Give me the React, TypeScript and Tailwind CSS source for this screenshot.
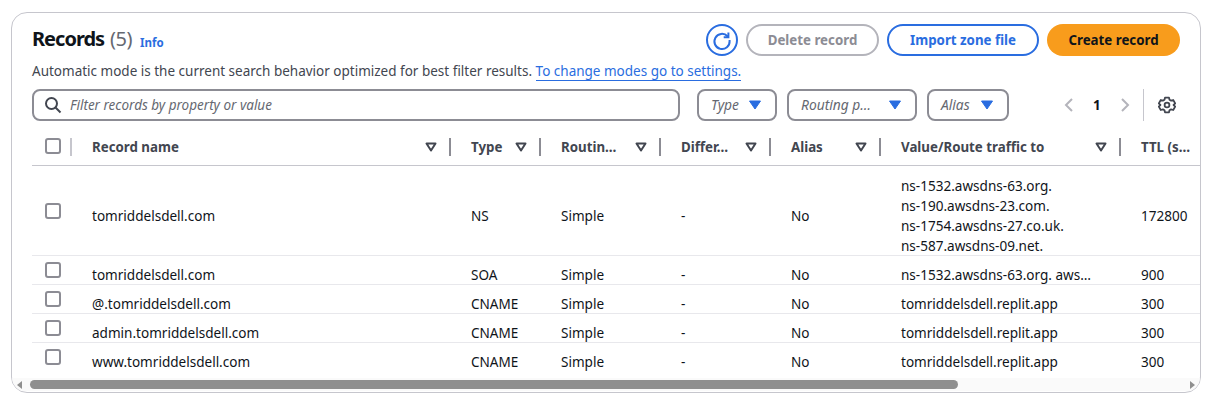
import type { ReactNode } from 'react';

const COLUMNS = 'grid grid-cols-[40px_379px_90px_120px_110px_110px_240px_90px]';

interface RecordRow {
  name: string;
  type: string;
  value: string[];
  ttl: string;
}

const RECORDS: RecordRow[] = [
  {
    name: 'tomriddelsdell.com',
    type: 'NS',
    value: ['ns-1532.awsdns-63.org.', 'ns-190.awsdns-23.com.', 'ns-1754.awsdns-27.co.uk.', 'ns-587.awsdns-09.net.'],
    ttl: '172800',
  },
  { name: 'tomriddelsdell.com', type: 'SOA', value: ['ns-1532.awsdns-63.org. aws…'], ttl: '900' },
  { name: '@.tomriddelsdell.com', type: 'CNAME', value: ['tomriddelsdell.replit.app'], ttl: '300' },
  { name: 'admin.tomriddelsdell.com', type: 'CNAME', value: ['tomriddelsdell.replit.app'], ttl: '300' },
  { name: 'www.tomriddelsdell.com', type: 'CNAME', value: ['tomriddelsdell.replit.app'], ttl: '300' },
];

function Checkbox(): JSX.Element {
  return <span className="block h-4 w-4 rounded-[3px] border-2 border-[#8c8c94] bg-white" />;
}

function SortIcon(): JSX.Element {
  return (
    <svg width="12" height="10" viewBox="0 0 12 10" className="shrink-0">
      <path d="M1.5 1.5h9L6 8.5z" fill="none" stroke="#424650" strokeWidth="2" strokeLinejoin="round" />
    </svg>
  );
}

function Caret(): JSX.Element {
  return (
    <svg width="12" height="10" viewBox="0 0 12 10" className="shrink-0">
      <path d="M0.5 1h11L6 9z" fill="#2a6de0" stroke="#2a6de0" strokeLinejoin="round" />
    </svg>
  );
}

function HeaderCell({ label, divider = true }: { label: string; divider?: boolean }): JSX.Element {
  return (
    <div className="flex h-[35px] items-center pb-[1px] pl-5 pr-[13px]">
      <span className="mt-[2px] flex-1 whitespace-nowrap text-[13.3px] font-bold text-[#424650]">{label}</span>
      {divider && <SortIcon />}
      {divider && <span className="-mr-[13px] ml-3 h-[18px] w-[2px] shrink-0 bg-[#8c8c94]" />}
    </div>
  );
}

function Select({ label, width }: { label: string; width: string }): JSX.Element {
  return (
    <div className={`flex h-8 items-center justify-between rounded-lg border-2 border-[#8c8c94] pl-[12px] pr-[14px] ${width}`}>
      <span className="text-[13.8px] italic text-[#656871]">{label}</span>
      <Caret />
    </div>
  );
}

function Button({ className, children }: { className: string; children: ReactNode }): JSX.Element {
  return (
    <button className={`flex h-8 items-center justify-center rounded-full pt-[1px] text-[13.3px] font-bold ${className}`}>
      {children}
    </button>
  );
}

function Cell({ first, children }: { first: boolean; children: ReactNode }): JSX.Element {
  return (
    <div className={`self-start pl-5 text-[13.55px] leading-5 text-[#0f141a] ${first ? 'pt-[10px]' : 'pt-[9px]'}`}>
      {children}
    </div>
  );
}

export default function App(): JSX.Element {
  return (
    <div className="h-[403px] w-[1211px] bg-white pl-[11px] pt-3 font-['Noto_Sans','Open_Sans',sans-serif]">
      <div className="h-[381px] w-[1190px] overflow-hidden rounded-2xl border border-[#c6c6cd]">
        <div className="pl-5 pr-5 pt-[11px]">
          <div className="flex h-8 items-center">
            <h1 className="mb-[2px] text-[20px] font-bold leading-8 tracking-[-1px] text-[#0f141a]">Records</h1>
            <span className="mb-[2px] ml-[6px] text-[20px] leading-8 tracking-[-0.5px] text-[#656871]">(5)</span>
            <a className="ml-2 mt-[5px] text-[11.5px] font-bold text-[#2a6de0]">Info</a>
            <div className="ml-auto flex items-center gap-2">
              <Button className="w-8 border-2 border-[#2a6de0]">
                <svg width="20" height="20" viewBox="0 0 20 20" fill="none" stroke="#2a6de0" strokeWidth="2">
                  <path d="M15.5 5.2A7.6 7.6 0 1 0 17.6 10" strokeLinecap="square" />
                  <path d="M16.4 1.5v4.7h-4.7" />
                </svg>
              </Button>
              <Button className="w-[133px] border-2 border-[#b4b4bb] text-[#8c8c94]">Delete record</Button>
              <Button className="w-[152px] border-2 border-[#2a6de0] text-[#2a6de0]">Import zone file</Button>
              <Button className="w-[133px] bg-[#f89c1c] text-[#0f141a]">Create record</Button>
            </div>
          </div>

          <p className="mt-[5px] text-[13.5px] leading-5 text-[#424650]">
            Automatic mode is the current search behavior optimized for best filter results.{' '}
            <a className="border-b border-[#2a6de0] text-[#2a6de0]">To change modes go to settings.</a>
          </p>

          <div className="mt-2 flex items-center">
            <div className="flex h-8 w-[648px] items-center rounded-lg border-2 border-[#8c8c94] pl-[10px]">
              <svg width="18" height="18" viewBox="0 0 18 18" fill="none" stroke="#424650" strokeWidth="2">
                <circle cx="7.5" cy="7.5" r="5.5" />
                <path d="M11.5 11.5l5 5" />
              </svg>
              <span className="ml-[8px] text-[13.5px] italic text-[#656871]">Filter records by property or value</span>
            </div>
            <div className="ml-[17px] flex gap-[10px]">
              <Select label="Type" width="w-20" />
              <Select label="Routing p…" width="w-[130px]" />
              <Select label="Alias" width="w-[82px]" />
            </div>
            <div className="ml-[53px] flex items-center">
              <svg width="14" height="16" viewBox="0 0 14 16" fill="none" stroke="#b4b4bb" strokeWidth="2">
                <path d="M10 2L4 8l6 6" />
              </svg>
              <span className="mx-[17px] text-[13.4px] font-bold text-[#0f141a]">1</span>
              <svg width="14" height="16" viewBox="0 0 14 16" fill="none" stroke="#b4b4bb" strokeWidth="2">
                <path d="M4 2l6 6-6 6" />
              </svg>
              <span className="ml-[11px] h-8 w-px bg-[#c6c6cd]" />
              <svg width="18" height="18" viewBox="0 0 18 18" fill="none" stroke="#424650" className="ml-[14px]">
                <path
                  d="M7 1.6h4l.5 2.1 1.6.9 2.1-.6 2 3.4-1.6 1.6 1.6 1.6-2 3.4-2.1-.6-1.6.9-.5 2.1H7l-.5-2.1-1.6-.9-2.1.6-2-3.4L2.4 9 .8 7.4l2-3.4 2.1.6 1.6-.9z"
                  strokeLinejoin="round"
                  strokeWidth="1.8"
                />
                <circle cx="9" cy="9" r="2.4" strokeWidth="1.8" />
              </svg>
            </div>
          </div>
        </div>

        <div className="ml-5 mt-[9px] h-[242px] overflow-hidden">
          <div className={`${COLUMNS} w-[1179px] border-b border-[#c6c6cd]`}>
            <div className="flex h-[35px] items-center pl-[13px]">
              <span className="mb-[3px]">
                <Checkbox />
              </span>
              <span className="mb-[1px] ml-[9px] h-[18px] w-[2px] bg-[#c6c6cd]" />
            </div>
            <HeaderCell label="Record name" />
            <HeaderCell label="Type" />
            <HeaderCell label="Routin…" />
            <HeaderCell label="Differ…" />
            <HeaderCell label="Alias" />
            <HeaderCell label="Value/Route traffic to" />
            <HeaderCell label="TTL (s…" divider={false} />
          </div>
          {RECORDS.map((record, index) => {
            const first = index === 0;
            const inner = first ? 'pt-[30px]' : '';
            return (
              <div
                key={record.name + index}
                className={`${COLUMNS} w-[1179px] items-center ${index < RECORDS.length - 1 ? 'border-b border-[#e8e8ec]' : ''} ${first ? 'h-[90px]' : 'h-[29px]'}`}
              >
                <div className={first ? 'pl-[13px]' : 'mb-[2px] pl-[13px]'}>
                  <Checkbox />
                </div>
                <Cell first={first}>
                  <div className={inner}>{record.name}</div>
                </Cell>
                <Cell first={first}>
                  <div className={inner}>{record.type}</div>
                </Cell>
                <Cell first={first}>
                  <div className={inner}>Simple</div>
                </Cell>
                <Cell first={first}>
                  <div className={inner}>-</div>
                </Cell>
                <Cell first={first}>
                  <div className={inner}>No</div>
                </Cell>
                <Cell first={first}>
                  {record.value.map((line) => (
                    <div key={line} className="whitespace-nowrap">
                      {line}
                    </div>
                  ))}
                </Cell>
                <Cell first={first}>
                  <div className={inner}>{record.ttl}</div>
                </Cell>
              </div>
            );
          })}
        </div>

        <div className="mt-[6px] flex h-[13px] items-center bg-[#fafafa]">
          <span className="ml-[5px] h-0 w-0 border-y-[4px] border-r-[5px] border-y-transparent border-r-[#8f8f8f]" />
          <span className="ml-[8px] h-[9px] w-[928px] rounded-full bg-[#8f8f8f]" />
          <span className="ml-auto mr-[5px] h-0 w-0 border-y-[4px] border-l-[5px] border-y-transparent border-l-[#8f8f8f]" />
        </div>
      </div>
    </div>
  );
}
